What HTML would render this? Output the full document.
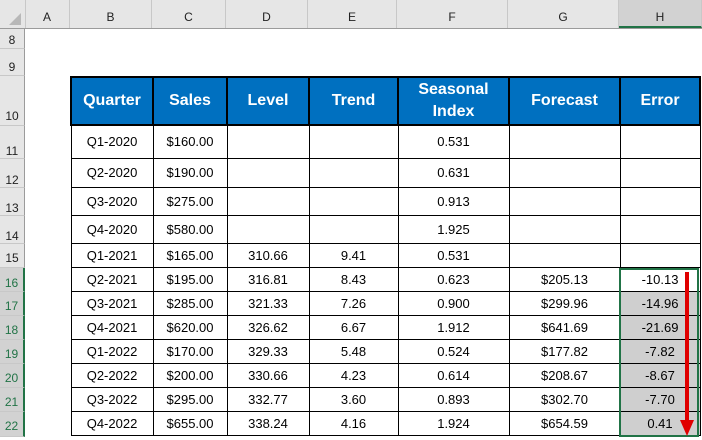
<!DOCTYPE html>
<html><head><style>
body{margin:0;width:702px;height:437px;overflow:hidden;background:#fff;font-family:"Liberation Sans",sans-serif;position:relative}
.hd{position:absolute;top:0;left:0;width:702px;height:29px;background:#e6e6e6;border-bottom:1px solid #9b9b9b;box-sizing:border-box}
.ch{position:absolute;top:0;height:28px;line-height:34px;text-align:center;font-size:12px;color:#222;border-right:1px solid #c8c8c8;box-sizing:border-box}
.rh{position:absolute;left:0;width:25px;background:#e6e6e6;border-bottom:1px solid #c8c8c8;border-right:1px solid #9b9b9b;box-sizing:border-box;font-size:12px;color:#222;text-align:center}
.g{background:#d2d2d2;color:#217346;border-right:2px solid #217346}
table{position:absolute;left:70px;top:76px;border-collapse:collapse;table-layout:fixed}
td{border:1px solid #000;text-align:center;font-size:13px;color:#000;padding:0}
tr.h td{background:#0070c0;color:#fff;font-weight:bold;font-size:16px;border:2px solid #000;height:46px;line-height:22px}
</style></head><body>
<div class="hd"></div>
<div style="position:absolute;left:0;top:0;width:25px;height:28px;border-right:1px solid #c8c8c8"></div>
<div style="position:absolute;left:9px;top:13px;width:0;height:0;border-left:12px solid transparent;border-bottom:12px solid #b8b8b8"></div>
<div class="ch" style="left:25px;width:45px">A</div>
<div class="ch" style="left:70px;width:82px">B</div>
<div class="ch" style="left:152px;width:74px">C</div>
<div class="ch" style="left:226px;width:82px">D</div>
<div class="ch" style="left:308px;width:89px">E</div>
<div class="ch" style="left:397px;width:111px">F</div>
<div class="ch" style="left:508px;width:111px">G</div>
<div class="ch" style="left:619px;width:83px;background:#d2d2d2;border-bottom:2px solid #217346">H</div>
<div class="rh" style="top:29px;height:20px;line-height:22px">8</div>
<div class="rh" style="top:49px;height:27px;line-height:36px">9</div>
<div class="rh" style="top:76px;height:50px;line-height:80px">10</div>
<div class="rh" style="top:126px;height:33px;line-height:50px">11</div>
<div class="rh" style="top:159px;height:29px;line-height:42px">12</div>
<div class="rh" style="top:188px;height:28px;line-height:40px">13</div>
<div class="rh" style="top:216px;height:28px;line-height:40px">14</div>
<div class="rh" style="top:244px;height:24px;line-height:28px">15</div>
<div class="rh g" style="top:268px;height:24px;line-height:30px">16</div>
<div class="rh g" style="top:292px;height:24px;line-height:28px">17</div>
<div class="rh g" style="top:316px;height:24px;line-height:28px">18</div>
<div class="rh g" style="top:340px;height:24px;line-height:28px">19</div>
<div class="rh g" style="top:364px;height:24px;line-height:28px">20</div>
<div class="rh g" style="top:388px;height:24px;line-height:28px">21</div>
<div class="rh g" style="top:412px;height:25px;line-height:28px">22</div>
<table>
<colgroup><col style="width:82px"><col style="width:74px"><col style="width:82px"><col style="width:89px"><col style="width:111px"><col style="width:111px"><col style="width:80px"></colgroup>
<tr class="h"><td>Quarter</td><td>Sales</td><td>Level</td><td>Trend</td><td>Seasonal<br>Index</td><td>Forecast</td><td>Error</td></tr>
<tr style="height:33px"><td>Q1-2020</td><td>$160.00</td><td></td><td></td><td>0.531</td><td></td><td></td></tr>
<tr style="height:29px"><td>Q2-2020</td><td>$190.00</td><td></td><td></td><td>0.631</td><td></td><td></td></tr>
<tr style="height:28px"><td>Q3-2020</td><td>$275.00</td><td></td><td></td><td>0.913</td><td></td><td></td></tr>
<tr style="height:28px"><td>Q4-2020</td><td>$580.00</td><td></td><td></td><td>1.925</td><td></td><td></td></tr>
<tr style="height:24px"><td>Q1-2021</td><td>$165.00</td><td>310.66</td><td>9.41</td><td>0.531</td><td></td><td></td></tr>
<tr style="height:24px"><td>Q2-2021</td><td>$195.00</td><td>316.81</td><td>8.43</td><td>0.623</td><td>$205.13</td><td>-10.13</td></tr>
<tr style="height:24px"><td>Q3-2021</td><td>$285.00</td><td>321.33</td><td>7.26</td><td>0.900</td><td>$299.96</td><td style="background:#cfcfcf">-14.96</td></tr>
<tr style="height:24px"><td>Q4-2021</td><td>$620.00</td><td>326.62</td><td>6.67</td><td>1.912</td><td>$641.69</td><td style="background:#cfcfcf">-21.69</td></tr>
<tr style="height:24px"><td>Q1-2022</td><td>$170.00</td><td>329.33</td><td>5.48</td><td>0.524</td><td>$177.82</td><td style="background:#cfcfcf">-7.82</td></tr>
<tr style="height:24px"><td>Q2-2022</td><td>$200.00</td><td>330.66</td><td>4.23</td><td>0.614</td><td>$208.67</td><td style="background:#cfcfcf">-8.67</td></tr>
<tr style="height:24px"><td>Q3-2022</td><td>$295.00</td><td>332.77</td><td>3.60</td><td>0.893</td><td>$302.70</td><td style="background:#cfcfcf">-7.70</td></tr>
<tr style="height:24px"><td>Q4-2022</td><td>$655.00</td><td>338.24</td><td>4.16</td><td>1.924</td><td>$654.59</td><td style="background:#cfcfcf">0.41</td></tr>
</table>
<div style="position:absolute;left:619px;top:268px;width:80px;height:169px;border:2px solid #217346;box-sizing:border-box"></div>
<div style="position:absolute;left:685px;top:272px;width:4px;height:150px;background:#e00000"></div>
<div style="position:absolute;left:680px;top:420px;width:0;height:0;border-left:7px solid transparent;border-right:7px solid transparent;border-top:16px solid #e00000"></div>
</body></html>
